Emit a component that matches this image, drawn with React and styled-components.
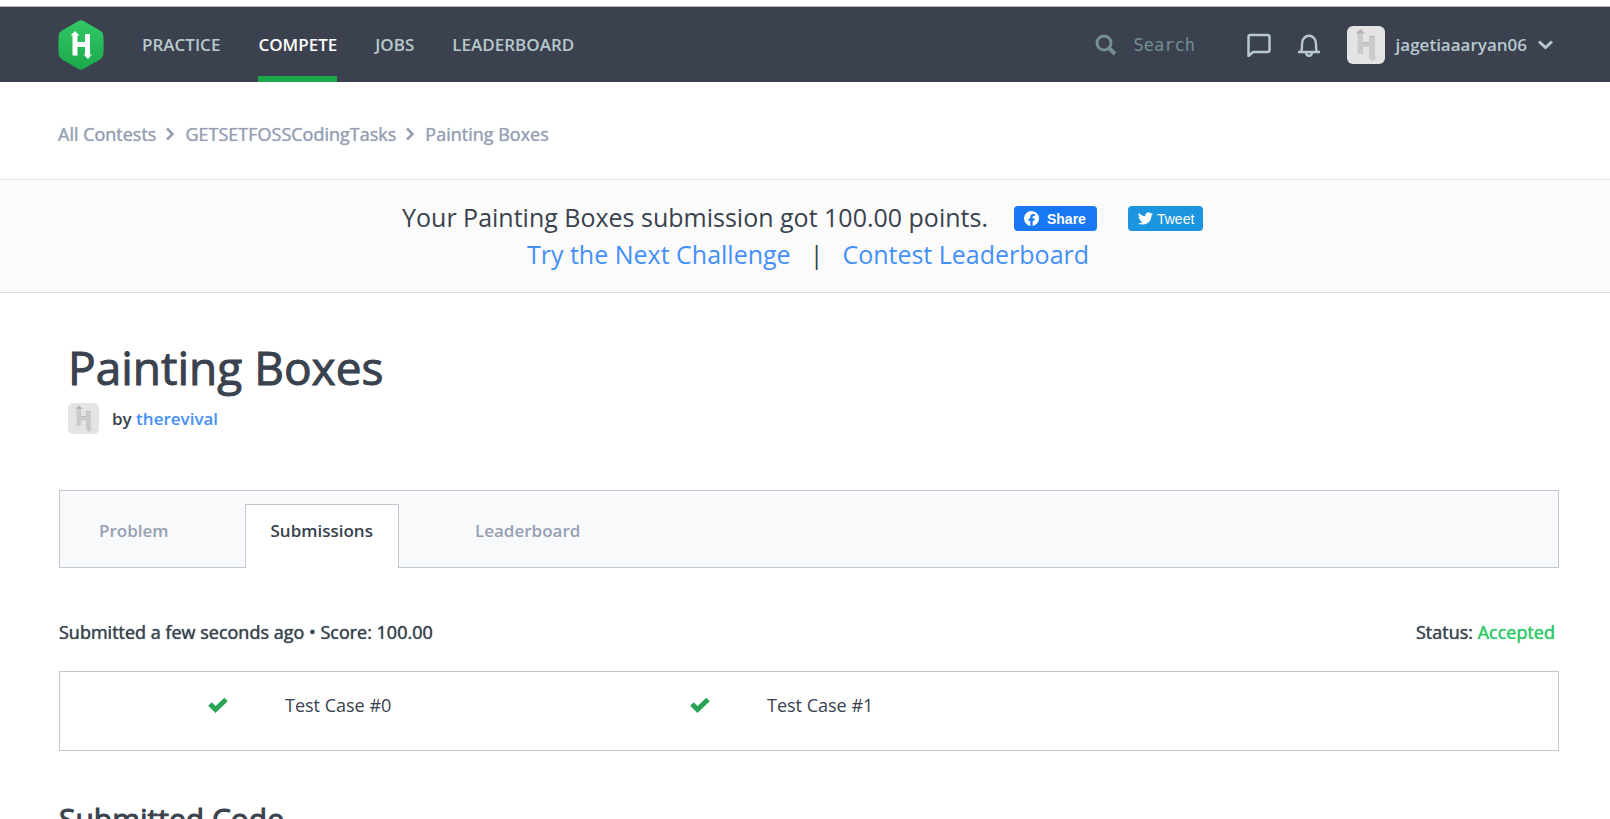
import React from "react";
import styled, { createGlobalStyle, css } from "styled-components";

const Global = createGlobalStyle`
  * { box-sizing: border-box; }
  html { scrollbar-width: none; }
  body { margin: 0; background: #fff; color: #39424e; font-family: "Open Sans", "Liberation Sans", sans-serif; font-size: 18px; line-height: 24px; }
  h1, h2, p, ul, ol { margin: 0; padding: 0; }
  ul, ol { list-style: none; }
  a { color: #4590f8; text-decoration: none; }
  button { font: inherit; border: 0; padding: 0; background: none; color: inherit; }
`;

const emphasis = css`
  font-weight: 400;
  text-shadow: 0 0 1px currentColor;
`;

const Header = styled.header`
  margin-top: 6px;
  border-top: 1px solid #b0b2b6;
  height: 76px;
  background: #3b414e;
  padding: 0 57px 0 58px;
  display: flex;
  align-items: center;
`;
const NavLinks = styled.nav`
  display: flex;
  gap: 38px;
  height: 100%;
  margin-left: 38px;
  flex: 1;
`;
const NavLink = styled.a`
  color: ${(p) => (p.$active ? "#fff" : "#b7c9cc")};
  font-weight: 600;
  font-size: 17px;
  display: flex;
  align-items: center;
  border-bottom: 6px solid ${(p) => (p.$active ? "#1ba94c" : "transparent")};
  border-top: 6px solid transparent;
`;
const Search = styled.label`
  display: flex;
  align-items: center;
  gap: 17px;
  color: #738f93;
`;
const SearchInput = styled.input`
  width: 97px;
  border: 0;
  padding: 0;
  background: transparent;
  font: 17px "DejaVu Sans Mono", monospace;
  &::placeholder { color: #738f93; opacity: 1; }
`;
const Tools = styled.div`
  display: flex;
  align-items: center;
  gap: 26px;
  margin-left: 16px;
  color: #b7c9cc;
`;
const IconButton = styled.button`
  display: flex;
`;
const UserButton = styled.button`
  display: flex;
  align-items: center;
  gap: 11px;
  font-weight: 600;
  font-size: 17px;
`;

const Crumbs = styled.nav`
  padding: 39px 58px 33px;
  ol { display: flex; align-items: center; height: 25px; gap: 10px; }
  li { display: flex; align-items: center; gap: 9px; }
  a { color: #97a0b3; ${emphasis} }
`;

const Banner = styled.section`
  background: #fbfbfb;
  border-top: 1px solid #e2e3e5;
  border-bottom: 1px solid #dcdde0;
  padding: 19px 0;
  font-size: 25px;
  line-height: 37px;
  display: flex;
  flex-direction: column;
  align-items: center;
`;
const ResultRow = styled.div`
  display: flex;
  align-items: center;
  gap: 26px;
  padding-right: 5px;
`;
const NextRow = styled.div`
  display: flex;
  gap: 19px;
  padding-left: 6px;
`;
const ShareGroup = styled.div`
  display: flex;
  gap: 31px;
  padding-top: 2px;
`;
const ShareButton = styled.button`
  display: flex;
  align-items: center;
  gap: ${(p) => (p.$tweet ? "4px" : "8px")};
  width: ${(p) => (p.$tweet ? "75px" : "83px")};
  height: 25px;
  padding-left: 10px;
  border-radius: 4px;
  color: #fff;
  background: ${(p) => (p.$tweet ? "#1b95e0" : "#1877f2")};
  font: ${(p) => (p.$tweet ? "400" : "700")} 14px/16px "Liberation Sans", sans-serif;
`;

const Content = styled.main`
  padding: 46px 51px 0 59px;
`;
const Title = styled.h1`
  padding-left: 9px;
  font-size: 46px;
  line-height: 56px;
  font-weight: 400;
  -webkit-text-stroke: 1px currentColor;
`;
const Author = styled.p`
  display: flex;
  align-items: center;
  gap: 13px;
  padding: 8px 0 0 9px;
  font-weight: 600;
  font-size: 17px;
`;
const TabBar = styled.nav`
  margin-top: 56px;
  height: 78px;
  border: 1px solid #c2c7d0;
  background: #f8f9fb;
  display: flex;
  align-items: flex-start;
  padding: 13px 0 0 13px;
`;
const Tab = styled.a`
  height: 64px;
  padding: 14px 25px 0;
  font-weight: 600;
  font-size: 17px;
  border: 1px solid transparent;
  color: #97a0b3;
  margin-right: 50px;
  ${(p) => p.$active && css`
    background: #fff;
    color: #39424e;
    border-color: #c2c7d0;
    border-bottom: 0;
  `}
`;
const Summary = styled.div`
  margin: 52px 4px 27px 0;
  display: flex;
  justify-content: space-between;
  ${emphasis}
`;
const Accepted = styled.span`
  color: #2ec866;
  text-shadow: 0 0 1px currentColor;
`;
const Cases = styled.ul`
  display: flex;
  height: 80px;
  border: 1px solid #c2c7d0;
  padding: 21px 0 0 148px;
`;
const Case = styled.li`
  flex: 0 1 482px;
  display: flex;
  align-items: center;
  gap: 57px;
  height: 24px;
`;
const CodeHeading = styled.h2`
  margin-top: 48px;
  font-size: 30px;
  line-height: 40px;
  font-weight: 400;
  -webkit-text-stroke: 1px currentColor;
`;

const Logo = () => (
  <svg width="46" height="50" viewBox="0 0 46 50" role="img" aria-label="Home">
    <defs>
      <linearGradient id="g" x1="0" y1="0" x2="0" y2="1">
        <stop offset="0" stopColor="#32c766" />
        <stop offset="1" stopColor="#1ba94c" />
      </linearGradient>
    </defs>
    <path fill="url(#g)" d="M20.500 1q2.500-1.500 5 0L42 10.500q3 1.800 3.300 5Q46 25 45.300 34.500q-.3 3.200-3.300 5L25.500 49q-2.500 1.500-5 0L4 39.500Q1 37.700 .7 34.500Q0 25 .7 15.500Q1 12.300 4 10.500z" />
    <path fill="#fff" d="M17 11l4.500 4.500H19.500V22h7.500v-8h5v20.500h2L30 39l-4.500-4.500H27V27h-7.500v8.500H14.500v-20H12.500z" />
  </svg>
);
const Avatar = ({ size }) => (
  <svg width={size} height={size} viewBox="0 0 38 38" aria-hidden="true">
    <rect width="38" height="38" rx="6" fill="#e4e4e4" />
    <path fill="#cacaca" d="M13.500 3l4.500 4.500h-2V16h6v-6h6v21h2.500L25.500 35.500 21 31h1V21h-6v7h-5.500V7.500H9z" />
    <path fill="#b5b5b5" d="M13.500 3l4.500 4.500H9zM22 10h6v1h-6zM16 16h6v1h-6z" />
  </svg>
);
const Chevron = () => (
  <svg width="15" height="10" viewBox="0 0 15 10" fill="none" stroke="currentColor" strokeWidth="3" aria-hidden="true"><path d="M1 1.500l6.500 6 6.500-6" /></svg>
);
const CrumbArrow = () => (
  <svg width="10" height="14" viewBox="0 0 10 14" fill="none" stroke="#97a0b3" strokeWidth="2.600" aria-hidden="true"><path d="M2 1.500L7.500 7 2 12.500" /></svg>
);
const Check = () => (
  <svg width="20" height="16" viewBox="0 0 20 16" aria-hidden="true"><path d="M2 7l5.500 5.500L18 2.500" fill="none" stroke="#27a555" strokeWidth="5" /></svg>
);

export default function App() {
  return (
    <>
      <Global />
      <Header>
        <Logo />
        <NavLinks aria-label="Main">
          <NavLink href="#practice">PRACTICE</NavLink>
          <NavLink href="#compete" $active>COMPETE</NavLink>
          <NavLink href="#jobs">JOBS</NavLink>
          <NavLink href="#leaderboard">LEADERBOARD</NavLink>
        </NavLinks>
        <Search>
          <svg width="22" height="22" viewBox="0 0 22 22" fill="none" stroke="currentColor" aria-hidden="true"><circle cx="9" cy="9" r="7" strokeWidth="3" /><path d="M14 14l6 6" strokeWidth="4" /></svg>
          <SearchInput type="text" placeholder="Search" aria-label="Search" />
        </Search>
        <Tools>
          <IconButton aria-label="Messages">
            <svg width="24" height="24" viewBox="0 0 24 24" fill="none" stroke="currentColor" strokeWidth="2.500" strokeLinejoin="round"><path d="M1.500 4q0-2 2-2h17q2 0 2 2v13q0 2-2 2H6l-4.500 4z" /></svg>
          </IconButton>
          <IconButton aria-label="Notifications">
            <svg width="24" height="24" viewBox="0 0 24 24" fill="none" stroke="currentColor" strokeWidth="2.400"><path d="M1 19h22M4 19q1-2 1-8c0-11 14-11 14 0q0 6 1 8M9 19c0 5 6 5 6 0" /></svg>
          </IconButton>
          <UserButton><Avatar size={38} />jagetiaaaryan06<Chevron /></UserButton>
        </Tools>
      </Header>
      <Crumbs aria-label="Breadcrumb">
        <ol>
          <li><a href="#contests">All Contests</a><CrumbArrow /></li>
          <li><a href="#contest">GETSETFOSSCodingTasks</a><CrumbArrow /></li>
          <li><a href="#challenge">Painting Boxes</a></li>
        </ol>
      </Crumbs>
      <Banner>
        <ResultRow>
          <p>Your Painting Boxes submission got 100.00 points.</p>
          <ShareGroup>
            <ShareButton>
              <svg width="15" height="15" viewBox="0 0 16 16" aria-hidden="true"><path fill="#fff" d="M16 8a8 8 0 1 0-9.250 7.900V10.300h-2V8h2V6.240c0-2 1.200-3.120 3.020-3.120.87 0 1.790.16 1.790.16v1.970h-1c-1 0-1.310.62-1.310 1.250V8h2.220l-.35 2.300H9.250v5.600A8 8 0 0 0 16 8z" /></svg>
              Share
            </ShareButton>
            <ShareButton $tweet>
              <svg width="15" height="15" viewBox="0 0 24 24" aria-hidden="true"><path fill="#fff" d="M23.950 4.570a10 10 0 0 1-2.820.77 4.960 4.960 0 0 0 2.160-2.720 9.900 9.900 0 0 1-3.120 1.190 4.920 4.920 0 0 0-8.380 4.480C7.690 8.100 4.070 6.130 1.640 3.160a4.920 4.920 0 0 0 1.520 6.570 4.900 4.900 0 0 1-2.230-.61v.06a4.920 4.920 0 0 0 3.950 4.830 5 5 0 0 1-2.210.08 4.940 4.940 0 0 0 4.600 3.420A9.870 9.870 0 0 1 0 19.540a14 14 0 0 0 7.550 2.210c9.050 0 14-7.500 14-13.980 0-.21 0-.42-.02-.63a9.940 9.940 0 0 0 2.420-2.570z" /></svg>
              Tweet
            </ShareButton>
          </ShareGroup>
        </ResultRow>
        <NextRow>
          <a href="#next">Try the Next Challenge</a>
          <span>|</span>
          <a href="#standings">Contest Leaderboard</a>
        </NextRow>
      </Banner>
      <Content>
        <Title>Painting Boxes</Title>
        <Author><Avatar size={31} /><span>by <a href="#author">therevival</a></span></Author>
        <TabBar aria-label="Challenge">
          <Tab href="#problem">Problem</Tab>
          <Tab href="#submissions" $active>Submissions</Tab>
          <Tab href="#ranks">Leaderboard</Tab>
        </TabBar>
        <Summary>
          <p>Submitted a few seconds ago • Score: 100.00</p>
          <p>Status: <Accepted>Accepted</Accepted></p>
        </Summary>
        <Cases>
          <Case><Check />Test Case #0</Case>
          <Case><Check />Test Case #1</Case>
        </Cases>
        <CodeHeading>Submitted Code</CodeHeading>
      </Content>
    </>
  );
}
